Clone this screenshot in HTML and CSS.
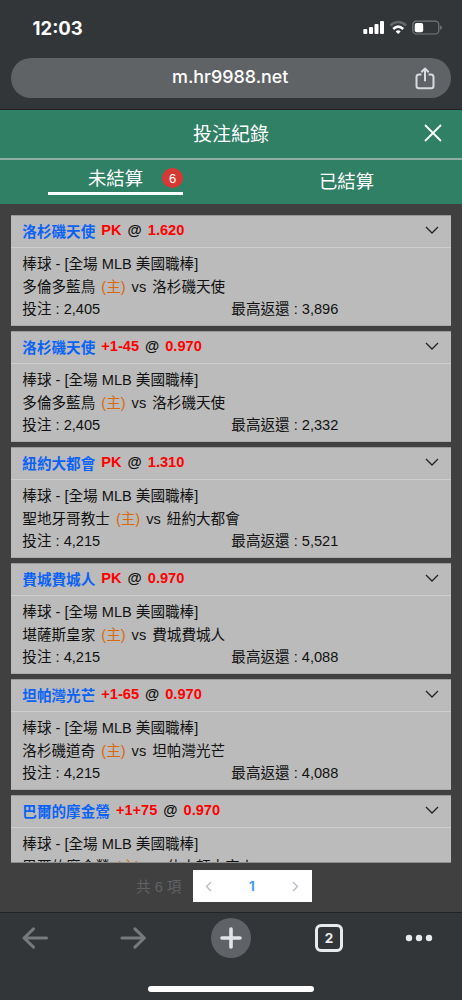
FILE: index.html
```html
<!DOCTYPE html>
<html lang="zh-Hant">
<head>
<meta charset="utf-8">
<meta name="viewport" content="width=device-width, initial-scale=1">
<title>投注紀錄</title>
<link rel="stylesheet" href="styles.css">
</head>
<body>
<div class="screen">
  <header class="browser-top">
    <div class="status">
      <span class="clock">12:03</span>
      <svg class="status-icons" width="80" height="16" viewBox="0 0 80 16">
        <g fill="#fff"><rect x="0.3" y="9" width="4" height="5" rx="1"/><rect x="6" y="7" width="4" height="7" rx="1"/><rect x="11.5" y="4" width="4" height="10" rx="1"/><rect x="17" y="1" width="4" height="13" rx="1"/></g>
        <g fill="none" stroke-width="2.6"><path d="M27.4 5.4Q35.2-1.4 43 5.4" stroke="#65686a"/><path d="M30.2 8.9Q35.2 4.5 40.2 8.9" stroke="#fff"/></g>
        <path d="M32.7 11.4Q35.2 9.3 37.7 11.4L35.2 14Z" fill="#fff"/>
        <rect x="49.8" y="1.2" width="26" height="12.8" rx="3.6" fill="none" stroke="#75787a" stroke-width="1.2"/>
        <rect x="51.7" y="3" width="8.5" height="9.2" rx="2" fill="#fff"/>
        <path d="M77.3 5.2Q80.3 7.6 77.3 10Z" fill="#85888a"/>
      </svg>
    </div>
    <div class="address">
      <span>m.hr9988.net</span>
      <svg class="share" width="20" height="24" viewBox="0 0 20 24"><path d="M6.5 7.4H4Q1.5 7.4 1.5 10V19Q1.5 21.3 4 21.3H16Q18.5 21.3 18.5 19V10Q18.5 7.4 16 7.4H13.5M10 14.3V2M6.3 5.2L10 1.5L13.7 5.2" fill="none" stroke="#d8dbe0" stroke-width="2" stroke-linejoin="round"/></svg>
    </div>
  </header>

  <div class="title-bar">
    <h1>投注紀錄</h1>
    <svg class="close" width="18" height="18" viewBox="0 0 18 18"><path d="M1 1L17 17M17 1L1 17" stroke="#fff" stroke-width="1.8" fill="none"/></svg>
  </div>
  <nav class="tabs">
    <div class="tab active"><span class="tab-inner">未結算<b class="badge">6</b></span></div>
    <div class="tab">已結算</div>
  </nav>

  <main class="content">
    <div class="list">
      <article class="card">
        <div class="pick"><span class="team">洛杉磯天使</span><span class="odds">PK</span><span class="at">@</span><span class="odds">1.620</span><svg class="chev" width="14" height="8" viewBox="0 0 14 8"><path d="M1 1L7 7L13 1"/></svg></div>
        <div class="detail"><p>棒球 - [全場 MLB 美國職棒]</p><p class="match"><span>多倫多藍鳥</span><span class="home">(主)</span><span>vs</span><span>洛杉磯天使</span></p><div class="sum"><span>投注 : 2,405</span><span>最高返還 : 3,896</span></div></div>
      </article>
      <article class="card">
        <div class="pick"><span class="team">洛杉磯天使</span><span class="odds">+1-45</span><span class="at">@</span><span class="odds">0.970</span><svg class="chev" width="14" height="8" viewBox="0 0 14 8"><path d="M1 1L7 7L13 1"/></svg></div>
        <div class="detail"><p>棒球 - [全場 MLB 美國職棒]</p><p class="match"><span>多倫多藍鳥</span><span class="home">(主)</span><span>vs</span><span>洛杉磯天使</span></p><div class="sum"><span>投注 : 2,405</span><span>最高返還 : 2,332</span></div></div>
      </article>
      <article class="card">
        <div class="pick"><span class="team">紐約大都會</span><span class="odds">PK</span><span class="at">@</span><span class="odds">1.310</span><svg class="chev" width="14" height="8" viewBox="0 0 14 8"><path d="M1 1L7 7L13 1"/></svg></div>
        <div class="detail"><p>棒球 - [全場 MLB 美國職棒]</p><p class="match"><span>聖地牙哥教士</span><span class="home">(主)</span><span>vs</span><span>紐約大都會</span></p><div class="sum"><span>投注 : 4,215</span><span>最高返還 : 5,521</span></div></div>
      </article>
      <article class="card">
        <div class="pick"><span class="team">費城費城人</span><span class="odds">PK</span><span class="at">@</span><span class="odds">0.970</span><svg class="chev" width="14" height="8" viewBox="0 0 14 8"><path d="M1 1L7 7L13 1"/></svg></div>
        <div class="detail"><p>棒球 - [全場 MLB 美國職棒]</p><p class="match"><span>堪薩斯皇家</span><span class="home">(主)</span><span>vs</span><span>費城費城人</span></p><div class="sum"><span>投注 : 4,215</span><span>最高返還 : 4,088</span></div></div>
      </article>
      <article class="card">
        <div class="pick"><span class="team">坦帕灣光芒</span><span class="odds">+1-65</span><span class="at">@</span><span class="odds">0.970</span><svg class="chev" width="14" height="8" viewBox="0 0 14 8"><path d="M1 1L7 7L13 1"/></svg></div>
        <div class="detail"><p>棒球 - [全場 MLB 美國職棒]</p><p class="match"><span>洛杉磯道奇</span><span class="home">(主)</span><span>vs</span><span>坦帕灣光芒</span></p><div class="sum"><span>投注 : 4,215</span><span>最高返還 : 4,088</span></div></div>
      </article>
      <article class="card">
        <div class="pick"><span class="team">巴爾的摩金鶯</span><span class="odds">+1+75</span><span class="at">@</span><span class="odds">0.970</span><svg class="chev" width="14" height="8" viewBox="0 0 14 8"><path d="M1 1L7 7L13 1"/></svg></div>
        <div class="detail"><p>棒球 - [全場 MLB 美國職棒]</p><p class="match"><span>巴爾的摩金鶯</span><span class="home">(主)</span><span>vs</span><span>休士頓太空人</span></p></div>
      </article>
    </div>
    <div class="pager">
      <span class="total">共 6 項</span>
      <div class="pages">
        <svg width="7" height="11" viewBox="0 0 7 11"><path d="M6 1L1.5 5.5L6 10"/></svg>
        <b>1</b>
        <svg width="7" height="11" viewBox="0 0 7 11"><path d="M1 1L5.5 5.5L1 10"/></svg>
      </div>
    </div>
  </main>

  <footer class="browser-bottom">
    <div class="tools">
      <svg width="40" height="40" viewBox="0 0 40 40"><path d="M31.5 20H9M18.5 10.8L9 20L18.5 29.2" fill="none" stroke="#77797b" stroke-width="3" stroke-linecap="round" stroke-linejoin="round"/></svg>
      <svg width="40" height="40" viewBox="0 0 40 40"><path d="M8.9 20H31.4M21.9 10.8L31.4 20L21.9 29.2" fill="none" stroke="#77797b" stroke-width="3" stroke-linecap="round" stroke-linejoin="round"/></svg>
      <svg width="40" height="40" viewBox="0 0 40 40"><circle cx="20" cy="20" r="20" fill="#5f6367"/><path d="M20 11V29M11 20H29" stroke="#e3e4e8" stroke-width="3.6" stroke-linecap="round"/></svg>
      <div class="tab-slot"><span class="tab-count">2</span></div>
      <svg class="more" width="40" height="40" viewBox="0 0 40 40"><g fill="#e8eaed"><circle cx="10" cy="20" r="3.2"/><circle cx="20" cy="20" r="3.2"/><circle cx="30" cy="20" r="3.2"/></g></svg>
    </div>
    <div class="home-bar"></div>
  </footer>
</div>
</body>
</html>
```
FILE: styles.css
```css
* { box-sizing: border-box; }
body {
  margin: 0;
  font-family: "Liberation Sans", "Noto Sans CJK TC", sans-serif;
  background: #333639;
}
h1, p { margin: 0; }
svg { display: block; }
.screen {
  width: 462px;
  height: 1000px;
  overflow: hidden;
  display: flex;
  flex-direction: column;
}
.browser-top {
  height: 110px;
  flex: none;
  padding: 17px 11px 0;
  background: #333639;
  border-bottom: 1px solid #202325;
  font-family: Inter, sans-serif;
  color: #fff;
}
.status {
  height: 41px;
  display: flex;
  justify-content: space-between;
  padding: 0 8px 0 21.5px;
}
.clock { font-size: 18.5px; font-weight: 700; line-height: 22px; }
.status-icons { margin-top: 3px; }
.address {
  height: 40px;
  border-radius: 20px;
  background: #5f6366;
  display: flex;
  align-items: center;
  justify-content: space-between;
  padding: 0 16px 3px 161px;
  font-size: 17.9px;
  font-weight: 500;
}
.share { margin-top: 5px; }
.title-bar {
  height: 50px;
  flex: none;
  display: grid;
  grid-template-columns: 1fr auto 1fr;
  align-items: center;
  background: #2f8065;
  border-bottom: 2px solid #8faea1;
  color: #fff;
}
.title-bar h1 {
  grid-column: 2;
  padding-top: 1px;
  font-size: 19px;
  font-weight: 400;
  line-height: 28px;
}
.close { justify-self: end; margin-right: 20px; margin-top: -2px; }
.tabs {
  height: 44px;
  flex: none;
  display: grid;
  grid-template-columns: 1fr 1fr;
  background: #2f8065;
  color: #fff;
  font-size: 18.4px;
  line-height: 28px;
}
.tab { display: flex; justify-content: center; padding-top: 8px; }
.tab.active { padding-top: 4px; }
.tab-inner {
  position: relative;
  width: 135px;
  height: 31px;
  line-height: 29px;
  text-align: center;
  border-bottom: 3px solid #fff;
}
.badge {
  position: absolute;
  right: 0;
  top: 4px;
  width: 21px;
  height: 20px;
  border-radius: 50%;
  background: #d63933;
  font-size: 13px;
  font-weight: 400;
  line-height: 21px;
}
.content {
  height: 708px;
  flex: none;
  background: #404040;
  padding: 11px 11px 0;
}
.list {
  height: 648px;
  overflow: hidden;
  display: flex;
  flex-direction: column;
  gap: 5px;
  border-bottom: 1px solid #8d8d8d;
}
.card {
  height: 111px;
  flex: none;
  background: #bbb;
  border-top: 1px solid #999;
  border-bottom: 1px solid #aaa;
  color: #111;
  font-size: 14.6px;
}
.pick {
  height: 32px;
  display: flex;
  align-items: center;
  gap: 6px;
  padding: 0 12.5px 3px 11.3px;
  border-bottom: 1px solid #cecece;
  font-weight: 700;
}
.team { color: #0b63f6; }
.odds { color: #f00; }
.at { color: #111; }
.chev { margin-left: auto; margin-bottom: 1px; }
.chev path { fill: none; stroke: #222; stroke-width: 1.3; }
.detail { padding: 5px 11.3px 0; line-height: 22.3px; }
.match { display: flex; gap: 6px; padding-top: 1px; margin-bottom: -1px; }
.home { color: #d96a0c; }
.sum { display: grid; grid-template-columns: 209px 1fr; }
.pager {
  height: 32px;
  margin-top: 7px;
  margin-left: 125px;
  display: flex;
  align-items: center;
  gap: 11px;
}
.total {
  width: 45.5px;
  padding-bottom: 2px;
  color: #606266;
  font-size: 14.6px;
  white-space: nowrap;
}
.pages {
  width: 119px;
  height: 32px;
  background: #fff;
  display: flex;
  align-items: center;
  justify-content: space-between;
  padding: 0 12px;
}
.pages b { color: #409eff; font: 700 13.5px Inter, sans-serif; }
.pages path { fill: none; stroke: #b8bcc4; stroke-width: 1.4; }
.browser-bottom {
  height: 88px;
  flex: none;
  background: #333639;
  border-top: 1px solid #202325;
  padding-top: 4.5px;
}
.tools {
  display: flex;
  gap: 58px;
  padding-left: 15px;
}
.tools > * { flex: none; }
.more { margin-left: -8.5px; }
.tab-slot {
  width: 40px;
  height: 40px;
  display: grid;
  place-items: center;
}
.tab-count {
  width: 28px;
  height: 28px;
  border: 3px solid #e8eaed;
  border-radius: 6px;
  color: #e8eaed;
  font: 700 13.5px/22px Inter, sans-serif;
  text-align: center;
}
.home-bar {
  width: 166px;
  height: 6px;
  margin: 28px auto 0;
  border-radius: 3px;
  background: #fff;
}
```
